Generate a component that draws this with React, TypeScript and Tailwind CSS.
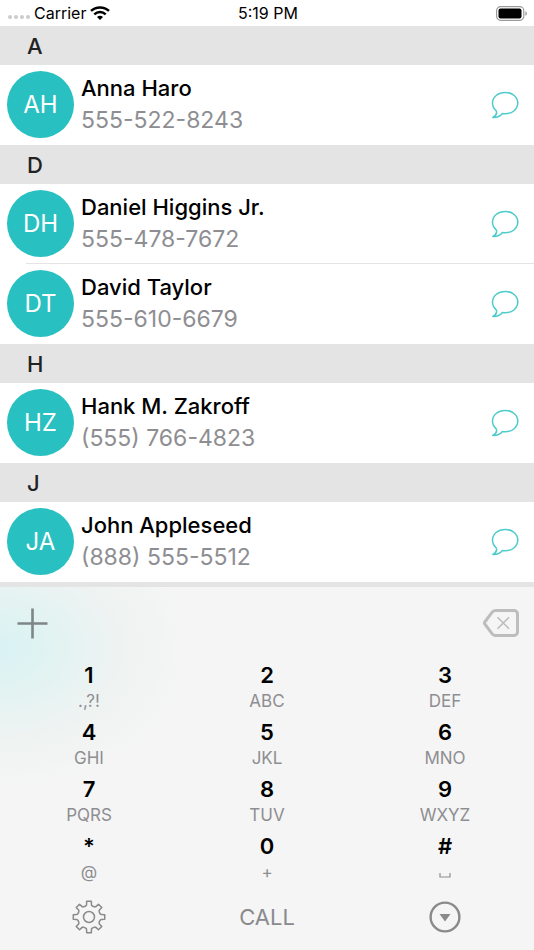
import { useState } from "react";

interface Contact {
  name: string;
  phone: string;
  initials: string;
}

interface Section {
  letter: string;
  contacts: Contact[];
}

interface Key {
  digit: string;
  letters: string;
}

const sections: Section[] = [
  {
    letter: "A",
    contacts: [{ name: "Anna Haro", phone: "555-522-8243", initials: "AH" }],
  },
  {
    letter: "D",
    contacts: [
      { name: "Daniel Higgins Jr.", phone: "555-478-7672", initials: "DH" },
      { name: "David Taylor", phone: "555-610-6679", initials: "DT" },
    ],
  },
  {
    letter: "H",
    contacts: [{ name: "Hank M. Zakroff", phone: "(555) 766-4823", initials: "HZ" }],
  },
  {
    letter: "J",
    contacts: [{ name: "John Appleseed", phone: "(888) 555-5512", initials: "JA" }],
  },
];

const keys: Key[] = [
  { digit: "1", letters: ".,?!" },
  { digit: "2", letters: "ABC" },
  { digit: "3", letters: "DEF" },
  { digit: "4", letters: "GHI" },
  { digit: "5", letters: "JKL" },
  { digit: "6", letters: "MNO" },
  { digit: "7", letters: "PQRS" },
  { digit: "8", letters: "TUV" },
  { digit: "9", letters: "WXYZ" },
  { digit: "*", letters: "@" },
  { digit: "0", letters: "+" },
  { digit: "#", letters: " " },
];

function WifiIcon() {
  return (
    <svg width="20" height="14" viewBox="0 0 20 14" fill="none" stroke="#000" strokeWidth="2.5">
      <path d="M1 4.9C6 .2 14 .2 19 4.9" />
      <path d="M4.3 8.3c3.3-3 8.1-3 11.4 0" />
      <path d="M10 14 7 11c1.7-1.6 4.3-1.6 6 0z" fill="#000" stroke="none" />
    </svg>
  );
}

function BatteryIcon() {
  return (
    <svg width="32" height="15" viewBox="0 0 32 15">
      <rect x=".6" y=".7" width="27.2" height="13.6" rx="4" fill="none" stroke="#9a9a9a" strokeWidth="1.2" />
      <rect x="2.5" y="2.5" width="23" height="10" rx="2" />
      <path d="M29.4 5.2c2 .8 2 3.8 0 4.6z" fill="#9a9a9a" />
    </svg>
  );
}

function BubbleIcon() {
  return (
    <svg width="28" height="28" viewBox="0 0 28 28" fill="none" stroke="#4fcbcb" strokeWidth="1.5" strokeLinejoin="round">
      <path d="M14.2 1.4C7 1.4 1.5 6.1 1.5 12.1c0 3.1 1.3 5.7 3.7 7.7 1 2.2-.4 5-3.4 6.7 4 .3 7.3-1.3 9.6-4 1 .2 1.8.3 2.8.3 7.1 0 12.6-4.7 12.6-10.7S21.3 1.4 14.2 1.4z" />
    </svg>
  );
}

function DeleteIcon() {
  return (
    <svg width="36" height="28" viewBox="0 0 36 28" fill="none" stroke="#bdbdbe">
      <path
        d="M12.5 1.5H31a3.5 3.5 0 0 1 3.5 3.5v18a3.5 3.5 0 0 1-3.5 3.5H12.5a4.5 4.5 0 0 1-3.5-1.8L1.8 15a1.6 1.6 0 0 1 0-2L9 3.3a4.5 4.5 0 0 1 3.5-1.8z"
        strokeWidth="3"
      />
      <path d="m14.5 8.3 11.5 11.5M26 8.3 14.5 19.8" strokeWidth="1.6" />
    </svg>
  );
}

function GearIcon() {
  // eight teeth, one every 45 degrees
  const points: string[] = [];
  for (let i = 0; i < 8; i++) {
    const base = (i * 45 - 90) * (Math.PI / 180);
    const at = (r: number, deg: number) => {
      const a = base + (deg * Math.PI) / 180;
      return `${(17 + r * Math.cos(a)).toFixed(2)} ${(17 + r * Math.sin(a)).toFixed(2)}`;
    };
    points.push(
      `${i === 0 ? "M" : "L"}${at(11.6, -16)}Q${at(11.9, -12)} ${at(12.8, -11)}L${at(15.9, -8.5)}` +
        `L${at(15.9, 8.5)}L${at(12.8, 11)}Q${at(11.9, 12)} ${at(11.6, 16)}Q${at(11.2, 22.5)} ${at(11.6, 29)}`
    );
  }
  return (
    <svg width="34" height="34" viewBox="0 0 34 34" fill="none" stroke="#8a8a8d" strokeWidth="1.5" strokeLinejoin="round">
      <path d={points.join("") + "Z"} />
      <circle cx="17" cy="17" r="5.5" />
    </svg>
  );
}

function HideIcon() {
  return (
    <svg width="32" height="32" viewBox="0 0 32 32">
      <circle cx="16" cy="16" r="14.4" fill="none" stroke="#8a8a8d" strokeWidth="2.4" />
      <path d="M10.5 13h11L16 20.5z" fill="#8a8a8d" />
    </svg>
  );
}

function SpaceIcon() {
  return (
    <svg width="12" height="12" viewBox="0 0 12 12" fill="none" stroke="#8e8e92" strokeWidth="1.2">
      <path d="M1 7v4h10V7" />
    </svg>
  );
}

function StatusBar() {
  return (
    <header className="grid h-[26px] grid-cols-3 items-center bg-white pr-1.5 pl-2 text-base text-black">
      <div className="flex items-center gap-1">
        <div className="flex gap-0.5 pt-2">
          <span className="size-1 rounded-full bg-[#cccccc]" />
          <span className="size-1 rounded-full bg-[#cccccc]" />
          <span className="size-1 rounded-full bg-[#cccccc]" />
          <span className="size-1 rounded-full bg-[#cccccc]" />
        </div>
        <span>Carrier</span>
        <WifiIcon />
      </div>
      <div className="text-center">5:19 PM</div>
      <div className="flex justify-end">
        <BatteryIcon />
      </div>
    </header>
  );
}

function ContactRow({ contact }: { contact: Contact }) {
  return (
    <li className="group relative flex h-20 items-center bg-white pr-[15px] pb-px pl-[7px]">
      <div className="flex size-[67px] shrink-0 items-center justify-center rounded-full bg-[#29c0c1] pt-px text-2xl text-white">
        {contact.initials}
      </div>
      <div className="ml-[7px] flex-1 pb-0.5">
        <div className="text-[22px] leading-8 font-medium text-black">{contact.name}</div>
        <div className="text-[23px] leading-8 text-[#8e8e92]">{contact.phone}</div>
      </div>
      <button type="button" aria-label={`Message ${contact.name}`}>
        <BubbleIcon />
      </button>
      <span className="absolute right-0 bottom-0 left-[26px] h-px bg-[#e4e4e4] group-last:hidden" />
    </li>
  );
}

export default function App() {
  const [number, setNumber] = useState("");

  return (
    <div className="flex min-h-screen flex-col bg-[#e4e4e4] font-['Inter','Liberation_Sans',sans-serif]">
      <StatusBar />

      <main>
        {sections.map((section) => (
          <section key={section.letter}>
            <h2 className="flex h-[39px] items-center pt-0.5 pl-[27px] text-[22px] font-medium text-[#222222]">
              {section.letter}
            </h2>
            <ul>
              {section.contacts.map((contact) => (
                <ContactRow key={contact.name} contact={contact} />
              ))}
            </ul>
          </section>
        ))}
      </main>

      <div className="mt-[5px] flex-1 bg-[#f5f5f5] bg-[radial-gradient(ellipse_190px_140px_at_0px_62px,#d9f2f4_0%,#e2f3f2_30%,#eef3f2_62%,#f5f5f5_100%)] pt-5 pb-4">
        <div className="flex h-8 items-center justify-between pr-[15px] pl-[17px]">
          <button type="button" aria-label="Add contact">
            <svg width="31" height="31" viewBox="0 0 31 31" stroke="#7d8586" strokeWidth="2.6">
              <path d="M15.5 .5v30M.5 15.5h30" />
            </svg>
          </button>
          <span className="text-2xl text-black">{number}</span>
          <button type="button" aria-label="Delete" onClick={() => setNumber(number.slice(0, -1))}>
            <DeleteIcon />
          </button>
        </div>

        <div className="mt-[22px] grid grid-cols-3 gap-y-[5px]">
          {keys.map((key) => (
            <button
              key={key.digit}
              type="button"
              aria-label={key.digit}
              onClick={() => setNumber(number + key.digit)}
              className="flex flex-col items-center"
            >
              <span className="text-[22px] leading-7 font-semibold text-black">{key.digit}</span>
              <span className="flex h-6 items-center text-[17px] leading-6 text-[#8e8e92]">
                {key.letters === " " ? <SpaceIcon /> : key.letters}
              </span>
            </button>
          ))}
        </div>

        <div className="mt-4 grid h-[34px] grid-cols-3 place-items-center">
          <button type="button" aria-label="Settings">
            <GearIcon />
          </button>
          <button type="button" className="text-[22px] text-[#8a8a8d]">
            CALL
          </button>
          <button type="button" aria-label="Hide keypad">
            <HideIcon />
          </button>
        </div>
      </div>
    </div>
  );
}
